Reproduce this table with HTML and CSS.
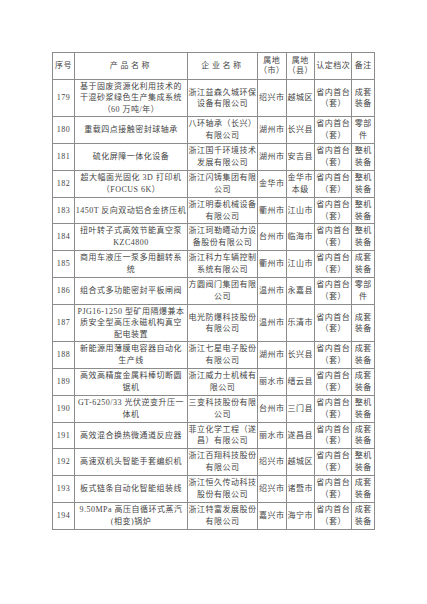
FILE: index.html
```html
<!DOCTYPE html>
<html lang="zh-CN">
<head>
<meta charset="utf-8">
<title>省内首台（套）产品名单</title>
<link rel="stylesheet" href="styles.css">
</head>
<body>
<div class="page">
<table class="list">
<colgroup>
<col class="c-no"><col class="c-prod"><col class="c-corp"><col class="c-city"><col class="c-county"><col class="c-level"><col class="c-note">
</colgroup>
<thead>
<tr class="head">
<th>序号</th><th class="wide">产品名称</th><th class="wide">企业名称</th><th>属地<br>（市）</th><th>属地<br>（县）</th><th>认定档次</th><th>备注</th>
</tr>
</thead>
<tbody>
<tr class="r3"><td>179</td><td>基于固废资源化利用技术的<br>干混砂浆绿色生产集成系统<br>（60 万吨/年）</td><td>浙江益森久城环保<br>设备有限公司</td><td>绍兴市</td><td>越城区</td><td>省内首台<br>（套）</td><td>成套<br>装备</td></tr>
<tr><td>180</td><td>重载四点接触密封球轴承</td><td>八环轴承（长兴）<br>有限公司</td><td>湖州市</td><td>长兴县</td><td>省内首台<br>（套）</td><td>零部<br>件</td></tr>
<tr><td>181</td><td>硫化屏障一体化设备</td><td>浙江国千环境技术<br>发展有限公司</td><td>湖州市</td><td>安吉县</td><td>省内首台<br>（套）</td><td>整机<br>装备</td></tr>
<tr><td>182</td><td>超大幅面光固化 3D 打印机<br>（FOCUS 6K）</td><td>浙江闪铸集团有限<br>公司</td><td>金华市</td><td>金华市<br>本级</td><td>省内首台<br>（套）</td><td>整机<br>装备</td></tr>
<tr><td>183</td><td>1450T 反向双动铝合金挤压机</td><td>浙江明泰机械设备<br>有限公司</td><td>衢州市</td><td>江山市</td><td>省内首台<br>（套）</td><td>整机<br>装备</td></tr>
<tr><td>184</td><td>扭叶转子式高效节能真空泵<br>KZC4800</td><td>浙江珂勒曦动力设<br>备股份有限公司</td><td>台州市</td><td>临海市</td><td>省内首台<br>（套）</td><td>整机<br>装备</td></tr>
<tr><td>185</td><td>商用车液压一泵多用翻转系<br>统</td><td>浙江科力车辆控制<br>系统有限公司</td><td>衢州市</td><td>江山市</td><td>省内首台<br>（套）</td><td>成套<br>装备</td></tr>
<tr><td>186</td><td>组合式多功能密封平板闸阀</td><td>方圆阀门集团有限<br>公司</td><td>温州市</td><td>永嘉县</td><td>省内首台<br>（套）</td><td>零部<br>件</td></tr>
<tr class="r3"><td>187</td><td>PJG16-1250 型矿用隔爆兼本<br>质安全型高压永磁机构真空<br>配电装置</td><td>电光防爆科技股份<br>有限公司</td><td>温州市</td><td>乐清市</td><td>省内首台<br>（套）</td><td>成套<br>装备</td></tr>
<tr><td>188</td><td>新能源用薄膜电容器自动化<br>生产线</td><td>浙江七星电子股份<br>有限公司</td><td>湖州市</td><td>长兴县</td><td>省内首台<br>（套）</td><td>成套<br>装备</td></tr>
<tr><td>189</td><td>高效高精度金属料棒切断圆<br>锯机</td><td>浙江威力士机械有<br>限公司</td><td>丽水市</td><td>缙云县</td><td>省内首台<br>（套）</td><td>成套<br>装备</td></tr>
<tr><td>190</td><td>GT-6250/33 光伏逆变升压一<br>体机</td><td>三变科技股份有限<br>公司</td><td>台州市</td><td>三门县</td><td>省内首台<br>（套）</td><td>整机<br>装备</td></tr>
<tr><td>191</td><td>高效混合换热微通道反应器</td><td>菲立化学工程（遂<br>昌）有限公司</td><td>丽水市</td><td>遂昌县</td><td>省内首台<br>（套）</td><td>成套<br>装备</td></tr>
<tr><td>192</td><td>高速双机头智能手套编织机</td><td>浙江百翔科技股份<br>有限公司</td><td>绍兴市</td><td>越城区</td><td>省内首台<br>（套）</td><td>整机<br>装备</td></tr>
<tr><td>193</td><td>板式链条自动化智能组装线</td><td>浙江恒久传动科技<br>股份有限公司</td><td>绍兴市</td><td>诸暨市</td><td>省内首台<br>（套）</td><td>成套<br>装备</td></tr>
<tr><td>194</td><td>9.50MPa 高压自循环式蒸汽<br>(相变)锅炉</td><td>浙江特富发展股份<br>有限公司</td><td>嘉兴市</td><td>海宁市</td><td>省内首台<br>（套）</td><td>成套<br>装备</td></tr>
</tbody>
</table>
</div>
</body>
</html>
```

FILE: styles.css
```css
html, body {
  margin: 0;
  padding: 0;
  background: #ffffff;
}

.page {
  padding: 52px 0 0 52px;
}

.list {
  width: 322px;
  table-layout: fixed;
  border-collapse: collapse;
  font-family: "Liberation Serif", "Noto Sans CJK SC", serif;
  font-size: 8px;
  color: #444444;
  letter-spacing: 0.5px;
}

.c-no { width: 22px; }
.c-prod { width: 113px; }
.c-corp { width: 70px; }
.c-city { width: 28.7px; }
.c-county { width: 28.3px; }
.c-level { width: 37.4px; }
.c-note { width: 22.6px; }

.list th,
.list td {
  border: 1px solid #8c8c8c;
  padding: 1px 0;
  text-align: center;
  vertical-align: middle;
  white-space: nowrap;
  overflow: hidden;
  line-height: 11.9px;
}

.list th {
  font-weight: normal;
  height: 26px;
  line-height: 10px;
  padding: 0;
}

.list th.wide {
  letter-spacing: 2.6px;
}

.list tr.r3 td {
  line-height: 11.4px;
}
```
